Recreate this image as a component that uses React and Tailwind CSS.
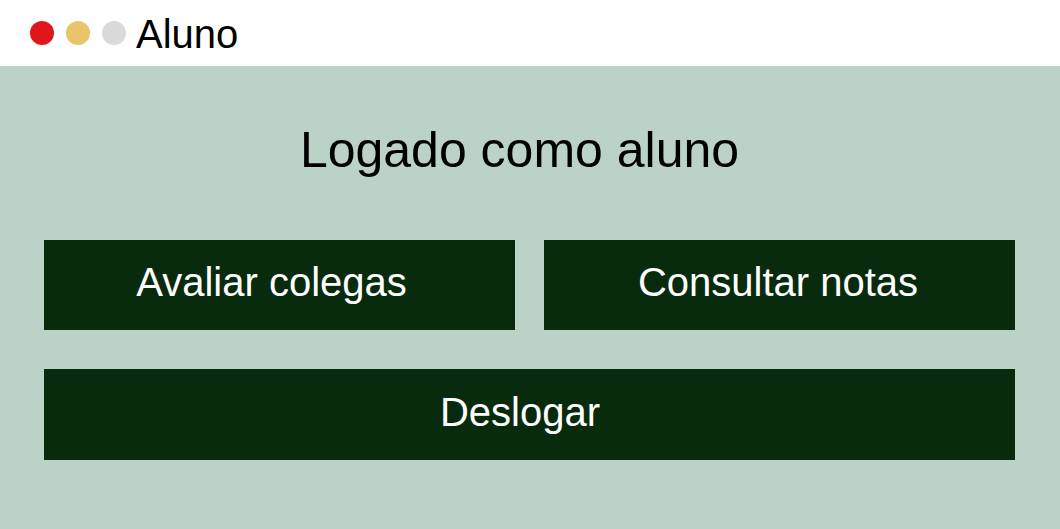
import React from 'react';

const font = { fontFamily: '"Liberation Sans", Arial, sans-serif' };

const MenuButton = ({ label, className = '' }) => (
  <button
    className={`h-[90px] bg-[#092b0d] text-white text-[40px] leading-none flex items-center justify-center pb-[6px] ${className}`}
  >
    {label}
  </button>
);

const App = () => {
  return (
    <div className="w-[1060px] h-[529px] flex flex-col" style={font}>
      {/* title bar */}
      <div className="h-[66px] bg-white flex items-center pl-[30px] pt-[2px]">
        <div className="flex items-center gap-[12px] -mt-[2px]">
          <span className="w-[24px] h-[24px] rounded-full bg-[#e0161b]"></span>
          <span className="w-[24px] h-[24px] rounded-full bg-[#e9c46a]"></span>
          <span className="w-[24px] h-[24px] rounded-full bg-[#dadada]"></span>
        </div>
        <span className="ml-[10px] text-[40px] text-black">Aluno</span>
      </div>

      {/* content */}
      <div className="flex-1 bg-[#bbd3c6] px-[44px] pt-[55px]">
        <h1 className="text-[50px] leading-[58px] text-black text-center pr-[21px]">
          Logado como aluno
        </h1>
        <div className="mt-[61px] grid grid-cols-2 gap-x-[29px] gap-y-[39px] pr-px">
          <MenuButton label="Avaliar colegas" className="pr-[16px]" />
          <MenuButton label="Consultar notas" className="pr-[3px]" />
          <MenuButton label="Deslogar" className="col-span-2 h-[91px] pr-[19px]" />
        </div>
      </div>
    </div>
  );
};

export default App;
